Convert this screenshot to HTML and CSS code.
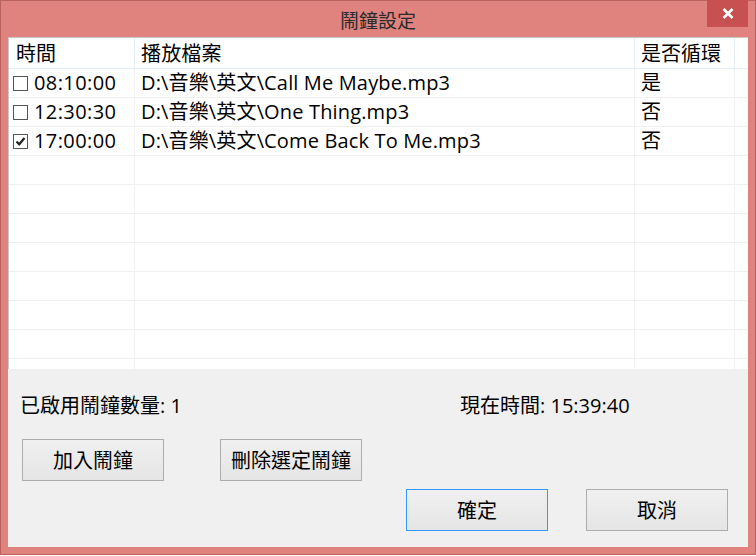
FILE: index.html
```html
<!DOCTYPE html>
<html lang="zh-Hant">
<head>
<meta charset="utf-8">
<title>鬧鐘設定</title>
<link rel="stylesheet" href="styles.css">
</head>
<body>
<div class="window">
  <div class="titlebar">
    <span class="title">鬧鐘設定</span>
    <div class="close">
      <svg width="12" height="11" viewBox="0 0 12 11"><path d="M1.5 1 L10.5 10 M10.5 1 L1.5 10" stroke="#fff" stroke-width="2.6" fill="none"/></svg>
    </div>
  </div>
  <div class="client">
    <div class="list">
      <div class="row head">
        <div class="cell c1">時間</div>
        <div class="cell c2">播放檔案</div>
        <div class="cell c3">是否循環</div>
        <div class="cell c4"></div>
      </div>
      <div class="row">
        <div class="cell c1"><span class="chk"></span><span class="time">08:10:00</span></div>
        <div class="cell c2">D:\音樂\英文\Call Me Maybe.mp3</div>
        <div class="cell c3">是</div>
        <div class="cell c4"></div>
      </div>
      <div class="row">
        <div class="cell c1"><span class="chk"></span><span class="time">12:30:30</span></div>
        <div class="cell c2">D:\音樂\英文\One Thing.mp3</div>
        <div class="cell c3">否</div>
        <div class="cell c4"></div>
      </div>
      <div class="row">
        <div class="cell c1"><span class="chk"><svg width="13" height="13" viewBox="0 0 13 13"><path d="M2.5 6.5 L5.2 9.3 L10.5 3" stroke="#222" stroke-width="2.2" fill="none"/></svg></span><span class="time">17:00:00</span></div>
        <div class="cell c2">D:\音樂\英文\Come Back To Me.mp3</div>
        <div class="cell c3">否</div>
        <div class="cell c4"></div>
      </div>
      <div class="row"><div class="cell c1"></div><div class="cell c2"></div><div class="cell c3"></div><div class="cell c4"></div></div>
      <div class="row"><div class="cell c1"></div><div class="cell c2"></div><div class="cell c3"></div><div class="cell c4"></div></div>
      <div class="row"><div class="cell c1"></div><div class="cell c2"></div><div class="cell c3"></div><div class="cell c4"></div></div>
      <div class="row"><div class="cell c1"></div><div class="cell c2"></div><div class="cell c3"></div><div class="cell c4"></div></div>
      <div class="row"><div class="cell c1"></div><div class="cell c2"></div><div class="cell c3"></div><div class="cell c4"></div></div>
      <div class="row"><div class="cell c1"></div><div class="cell c2"></div><div class="cell c3"></div><div class="cell c4"></div></div>
      <div class="row"><div class="cell c1"></div><div class="cell c2"></div><div class="cell c3"></div><div class="cell c4"></div></div>
      <div class="row"><div class="cell c1"></div><div class="cell c2"></div><div class="cell c3"></div><div class="cell c4"></div></div>
    </div>
    <div class="panel">
      <div class="labels">
        <span class="lbl count">已啟用鬧鐘數量: 1</span>
        <span class="lbl">現在時間: 15:39:40</span>
      </div>
      <div class="btnrow first">
        <button class="btn">加入鬧鐘</button>
        <button class="btn">刪除選定鬧鐘</button>
      </div>
      <div class="btnrow second">
        <button class="btn default">確定</button>
        <button class="btn">取消</button>
      </div>
    </div>
  </div>
</div>
</body>
</html>
```
FILE: styles.css
```css
html, body {
  margin: 0;
  padding: 0;
  background: #ffffff;
}
body {
  font-family: "Open Sans", "Noto Sans CJK TC", sans-serif;
  font-size: 20px;
  color: #000;
}
.window {
  position: relative;
  box-sizing: border-box;
  width: 756px;
  height: 555px;
  background: #e0837f;
  border: 1px solid #b9625e;
  padding: 0 7px 7px 7px;
  display: flex;
  flex-direction: column;
}
.titlebar {
  height: 36px;
  display: flex;
  align-items: center;
  justify-content: center;
  flex: none;
}
.title {
  font-family: "Noto Sans CJK TC", sans-serif;
  font-size: 19px;
  color: #2a2a2a;
  margin-top: 1px;
  margin-left: 0;
}
.close {
  position: absolute;
  top: -1px;
  right: 7px;
  width: 41px;
  height: 27px;
  background: #c75050;
  display: flex;
  align-items: center;
  justify-content: center;
}
.client {
  flex: 1;
  background: #f0f0f0;
  display: flex;
  flex-direction: column;
}
.list {
  height: 332px;
  box-sizing: border-box;
  background: #fff;
  border-top: 1px solid #c9c9c9;
  border-left: 1px solid #c9c9c9;
  overflow: hidden;
  flex: none;
}
.row {
  display: grid;
  grid-template-columns: 126px 500px 100px 1fr;
  height: 29px;
  box-sizing: border-box;
  border-bottom: 1px solid #f0f0f0;
}
.row.head {
  height: 31px;
  border-bottom: 1px solid #e5edf6;
}
.cell {
  box-sizing: border-box;
  border-right: 1px solid #f0f0f0;
  display: flex;
  align-items: center;
  white-space: nowrap;
  padding-left: 6px;
  line-height: 1;
}
.head .cell {
  border-right-color: #e5edf6;
  font-family: "Noto Sans CJK TC", sans-serif;
}
.row .c1 {
  padding-left: 4px;
}
.row.head .c1 {
  padding-left: 7px;
}
.c2 {
  letter-spacing: 0.15px;
}
.time {
  letter-spacing: 0.4px;
}
.c4 {
  border-right: none;
}
.chk {
  width: 15px;
  height: 15px;
  box-sizing: border-box;
  border: 1px solid #555;
  background: #fff;
  margin-right: 6px;
  display: inline-flex;
  align-items: center;
  justify-content: center;
  flex: none;
}
.chk svg { display: block; }
.panel {
  flex: 1;
  display: flex;
  flex-direction: column;
  padding-top: 24px;
}
.labels {
  display: flex;
  height: 22px;
  align-items: center;
  padding-left: 12px;
}
.lbl {
  white-space: nowrap;
}
.count {
  width: 440px;
}
.btnrow {
  display: flex;
}
.btnrow.first {
  margin-top: 24px;
  padding-left: 14px;
  gap: 56px;
}
.btnrow.second {
  margin-top: 8px;
  justify-content: flex-end;
  padding-right: 20px;
  gap: 38px;
}
.btn {
  width: 142px;
  height: 42px;
  box-sizing: border-box;
  border: 1px solid #adadad;
  background: linear-gradient(#f0f0f0, #e5e5e5);
  font-family: "Noto Sans CJK TC", sans-serif;
  font-size: 20px;
  color: #000;
  padding: 0;
  margin: 0;
  line-height: 1;
}
.btn.default {
  border-color: #3399ff;
}
```
